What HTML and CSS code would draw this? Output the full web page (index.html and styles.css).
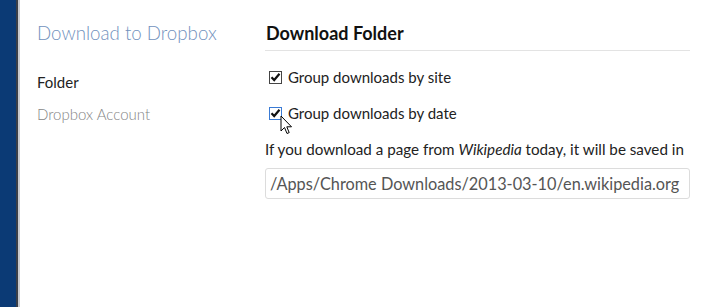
FILE: index.html
```html
<!DOCTYPE html>
<html lang="en">
<head>
    <meta charset="UTF-8">
    <title>Download to Dropbox - Options</title>
    <link rel="stylesheet" href="styles.css">
</head>
<body>
    <div class="frame">
        <div class="edge"></div>
        <div class="nav">
            <h1 class="nav-title">Download to Dropbox</h1>
            <div class="nav-item active">Folder</div>
            <div class="nav-item">Dropbox Account</div>
        </div>
        <div class="main">
            <h2>Download Folder</h2>
            <label class="option">
                <span class="box"><svg width="11" height="10" viewBox="0 0 11 10"><path d="M1.5 5.2 L4.2 8 L9.5 1.8" fill="none" stroke="#111" stroke-width="2.2"/></svg></span>
                Group downloads by site
            </label>
            <label class="option">
                <span class="box hover"><svg width="11" height="10" viewBox="0 0 11 10"><path d="M1.5 5.2 L4.2 8 L9.5 1.8" fill="none" stroke="#111" stroke-width="2.2"/></svg></span>
                Group downloads by date
                <svg class="cursor" width="14" height="20" viewBox="0 0 14 20"><path d="M1 1 L1 16 L4.5 12.5 L7 18.5 L9.2 17.6 L6.8 11.8 L11.5 11.8 Z" fill="#fff" stroke="#000" stroke-width="1"/></svg>
            </label>
            <p class="hint">If you download a page from <em>Wikipedia</em> today, it will be saved in</p>
            <div class="path">/Apps/Chrome Downloads/2013-03-10/en.wikipedia.org</div>
        </div>
    </div>
</body>
</html>
```
FILE: styles.css
```css
body {
    margin: 0;
    font-family: 'Lato', 'Liberation Sans', sans-serif;
    background-color: white;
}
.frame {
    display: flex;
    height: 307px;
}
.edge {
    width: 16px;
    background-color: #0b3a75;
    border-right: 2px solid #3b3f48;
    box-shadow: 2px 0 0 #c9cbd0;
}
.nav {
    width: 228px;
    padding-left: 19px;
    padding-top: 22px;
}
.nav-title {
    margin: 0 0 29px 0;
    font-size: 18.7px;
    font-weight: 300;
    color: #7191bd;
}
.nav-item {
    font-size: 15px;
    color: #858585;
    font-weight: 300;
    margin-bottom: 14px;
}
.nav-item.active {
    color: #222;
    font-weight: 400;
}
.main {
    width: 425px;
    padding-top: 22px;
}
h2 {
    margin: 0 0 17px 0;
    padding: 0 0 6px 1px;
    font-size: 18px;
    font-weight: 700;
    color: #111;
    border-bottom: 1px solid #e3e3e3;
}
.option {
    position: relative;
    display: flex;
    align-items: center;
    gap: 6px;
    font-size: 15px;
    color: #222;
    padding-left: 4px;
    margin-bottom: 18px;
}
.box {
    width: 11px;
    height: 11px;
    border: 1px solid #444;
    display: flex;
    align-items: center;
    justify-content: center;
}
.box.hover {
    border-color: #3a7bd5;
}
.cursor {
    position: absolute;
    left: 15px;
    top: 11px;
}
.hint {
    margin: 11px 0 10px 0;
    font-size: 15.2px;
    color: #222;
}
.path {
    border: 1px solid #dcdcdc;
    border-radius: 3px;
    padding: 5px 4px 5px 4px;
    font-size: 16.3px;
    color: #555;
    white-space: nowrap;
}
```
